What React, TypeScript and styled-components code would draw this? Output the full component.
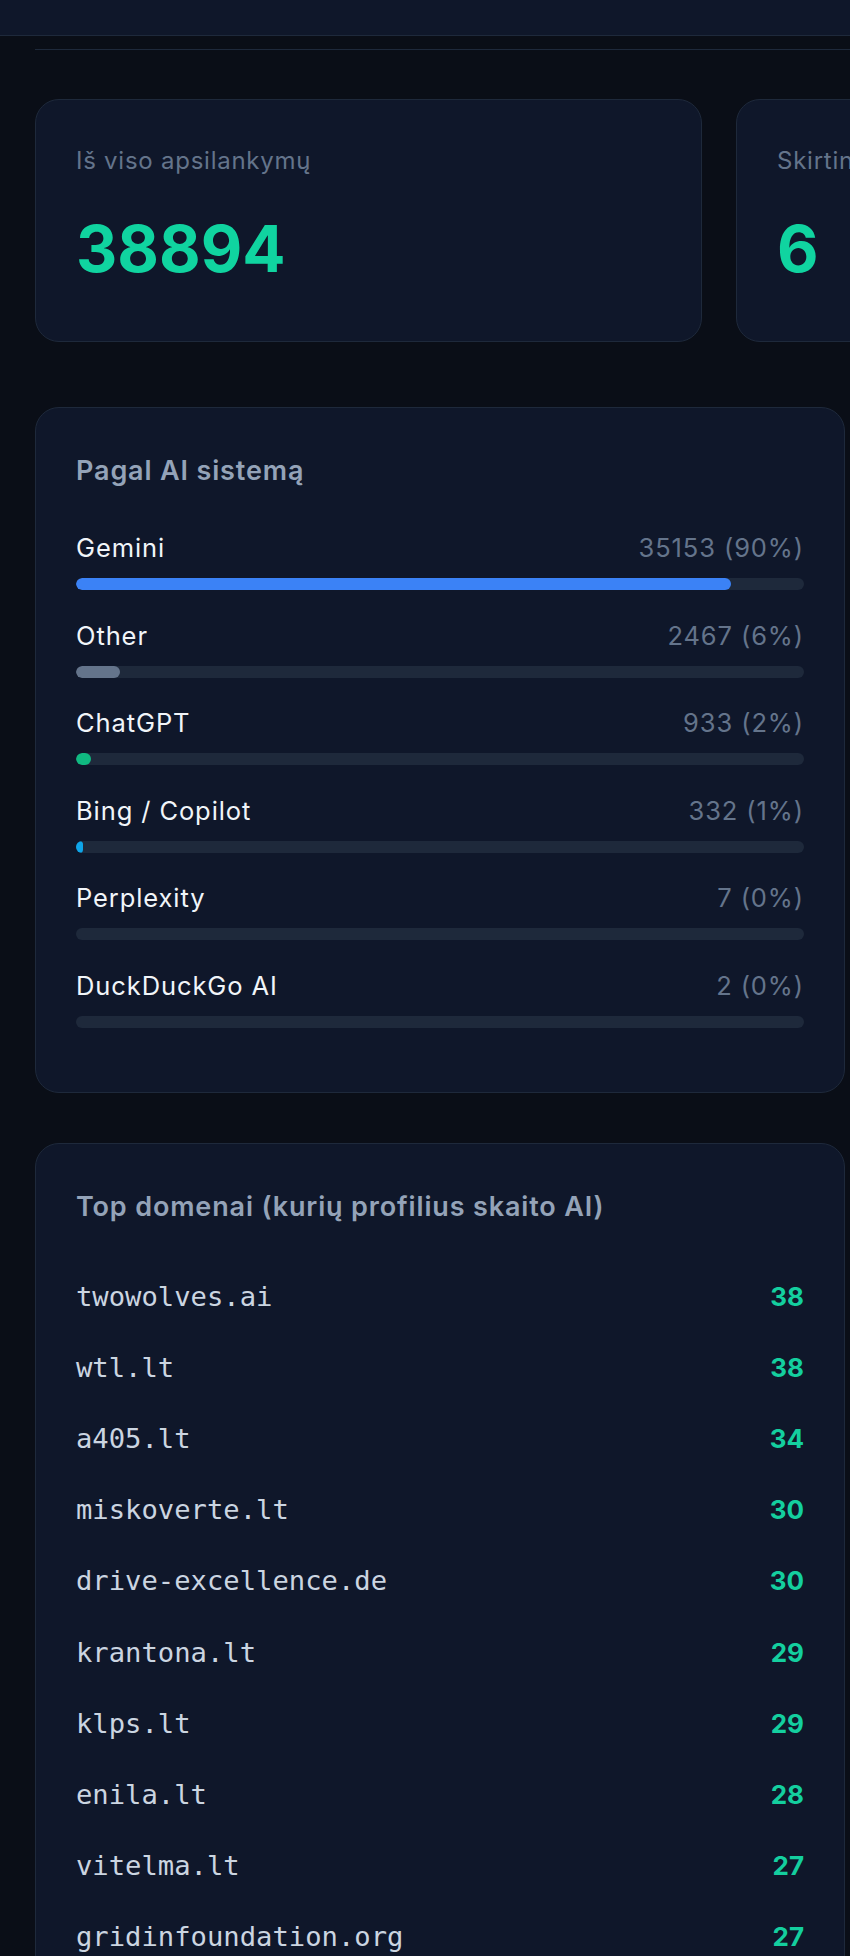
import styled, { createGlobalStyle } from "styled-components";

const GlobalStyle = createGlobalStyle`
  html, body {
    margin: 0;
    padding: 0;
    background: #0a0e17;
  }
  body {
    font-family: Inter, "Noto Sans", sans-serif;
    overflow-x: hidden;
  }
`;

const Page = styled.div`
  min-height: 1956px;
  background: #0a0e17;
  overflow: hidden;
`;

const TopBar = styled.header`
  height: 35px;
  background: #0f172a;
  border-bottom: 1px solid #1e293b;
`;

const Main = styled.main`
  padding: 13px 0 0 35px;
`;

const SubNav = styled.nav`
  height: 0;
  border-bottom: 1px solid #1e293b;
`;

const StatsRow = styled.div`
  display: flex;
  gap: 34px;
  margin-top: 49px;
`;

const StatCard = styled.div`
  flex: 0 0 667px;
  box-sizing: border-box;
  background: #0f172a;
  border: 1px solid #1e293b;
  border-radius: 24px;
  padding: 43px 40px 44px;
`;

const StatLabel = styled.div`
  font-size: 24px;
  line-height: 36px;
  letter-spacing: 0.75px;
  color: #64748b;
  white-space: nowrap;
`;

const StatValue = styled.div`
  margin-top: 22px;
  font-size: 64px;
  font-weight: 700;
  line-height: 96px;
  color: #10d4a0;
`;

const Panel = styled.section<{ $top: number }>`
  width: 810px;
  box-sizing: border-box;
  margin-top: ${(p) => p.$top}px;
  background: #0f172a;
  border: 1px solid #1e293b;
  border-radius: 24px;
  padding: 43px 40px 64px;
`;

const PanelTitle = styled.h2<{ $mb: number }>`
  margin: 0 0 ${(p) => p.$mb}px;
  font-size: 27px;
  font-weight: 600;
  line-height: 40px;
  letter-spacing: 0.85px;
  color: #94a3b8;
`;

const SystemRow = styled.div`
  margin-bottom: 27.5px;
  &:last-child {
    margin-bottom: 0;
  }
`;

const RowHead = styled.div`
  display: flex;
  justify-content: space-between;
  font-size: 25.5px;
  line-height: 36px;
  letter-spacing: 0.9px;
  margin-bottom: 12px;
`;

const SystemName = styled.span`
  color: #f1f5f9;
`;

const SystemCount = styled.span`
  color: #64748b;
`;

const Track = styled.div`
  height: 12px;
  border-radius: 6px;
  background: #1e293b;
  overflow: hidden;
`;

const Fill = styled.div<{ $color: string }>`
  height: 100%;
  border-radius: 6px;
  background: ${(p) => p.$color};
`;

const DomainRow = styled.div`
  display: flex;
  justify-content: space-between;
  align-items: center;
  height: 71.2px;
`;

const DomainName = styled.span`
  font-family: "DejaVu Sans Mono", "Liberation Mono", monospace;
  font-size: 27.2px;
  color: #cbd5e1;
`;

const DomainCount = styled.span`
  font-size: 26px;
  font-weight: 700;
  color: #14cf9f;
`;

const total = 38894;

const systems = [
  { name: "Gemini", count: 35153, color: "#3b82f6" },
  { name: "Other", count: 2467, color: "#64748b" },
  { name: "ChatGPT", count: 933, color: "#10b981" },
  { name: "Bing / Copilot", count: 332, color: "#0ea5e9" },
  { name: "Perplexity", count: 7, color: "#a855f7" },
  { name: "DuckDuckGo AI", count: 2, color: "#f97316" },
];

const domains = [
  { name: "twowolves.ai", count: 38 },
  { name: "wtl.lt", count: 38 },
  { name: "a405.lt", count: 34 },
  { name: "miskoverte.lt", count: 30 },
  { name: "drive-excellence.de", count: 30 },
  { name: "krantona.lt", count: 29 },
  { name: "klps.lt", count: 29 },
  { name: "enila.lt", count: 28 },
  { name: "vitelma.lt", count: 27 },
  { name: "gridinfoundation.org", count: 27 },
];

function App() {
  return (
    <Page>
      <GlobalStyle />
      <TopBar />
      <Main>
        <SubNav />
        <StatsRow>
          <StatCard>
            <StatLabel>Iš viso apsilankymų</StatLabel>
            <StatValue>{total}</StatValue>
          </StatCard>
          <StatCard>
            <StatLabel>Skirtingų AI sistemų</StatLabel>
            <StatValue>{systems.length}</StatValue>
          </StatCard>
        </StatsRow>

        <Panel $top={65}>
          <PanelTitle $mb={39}>Pagal AI sistemą</PanelTitle>
          {systems.map((s) => {
            const pct = Math.round((s.count / total) * 100);
            return (
              <SystemRow key={s.name}>
                <RowHead>
                  <SystemName>{s.name}</SystemName>
                  <SystemCount>
                    {s.count} ({pct}%)
                  </SystemCount>
                </RowHead>
                <Track>
                  <Fill $color={s.color} style={{ width: `${pct}%` }} />
                </Track>
              </SystemRow>
            );
          })}
        </Panel>

        <Panel $top={50}>
          <PanelTitle $mb={34}>Top domenai (kurių profilius skaito AI)</PanelTitle>
          {domains.map((d) => (
            <DomainRow key={d.name}>
              <DomainName>{d.name}</DomainName>
              <DomainCount>{d.count}</DomainCount>
            </DomainRow>
          ))}
        </Panel>
      </Main>
    </Page>
  );
}

export default App;
